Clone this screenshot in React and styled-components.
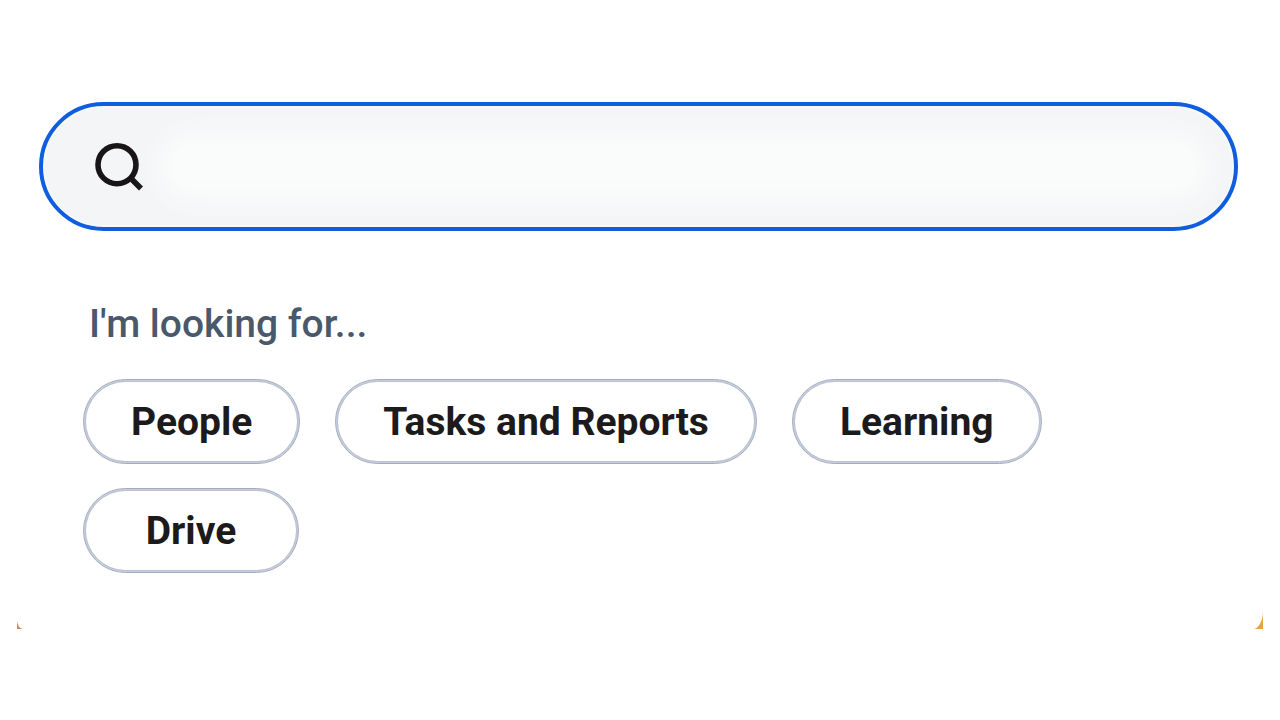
import React from 'react';
import styled, { createGlobalStyle } from 'styled-components';


const GlobalStyle = createGlobalStyle`
* {
    box-sizing: border-box;
}

body {
    margin: 0;
    background: #ffffff;
    font-family: Roboto, "Liberation Sans", sans-serif;
}
`;

const Backdrop = styled.main`
margin: 0 17px;
background: linear-gradient(90deg, #cf8a55 50%, #e3a43f 50%);
`;

const Panel = styled.div`
padding: 102px 25px 56px 22px;
background: #ffffff;
border-radius: 0 0 10px 6px / 0 0 18px 9px;
`;

const SearchBar = styled.label`
display: flex;
align-items: center;
gap: 26px;
height: 129px;
padding: 0 38px 0 50px;
border: 4px solid #0f5de0;
border-radius: 65px;
background: #f4f5f7;
box-shadow: inset 0 0 2px 1px #fffdf2;
`;

const SearchIcon = styled.svg`
flex: none;
width: 52px;
height: 52px;
`;

const SearchInput = styled.input`
flex: 1;
min-width: 0;
height: 44px;
border: 0;
outline: 0;
border-radius: 20px;
background: #fafcfb;
box-shadow: 0 0 24px 12px #fafcfb;
font: inherit;
font-size: 39px;
color: #1c1a1b;
`;

const Suggestions = styled.section`
padding: 68px 44px 0;
`;

const Heading = styled.h2`
margin: 0 0 30px;
padding-left: 6px;
font-size: 39px;
font-weight: 500;
line-height: 50px;
color: #4a586b;
`;

const ChipList = styled.div`
display: flex;
flex-wrap: wrap;
gap: 24px 35px;
`;

const Chip = styled.button`
min-width: 216px;
height: 85px;
padding: 0 47px;
border: 1px solid #a3a9ba;
border-radius: 43px;
background: transparent;
box-shadow: inset 0 0 0 1px #c6cfdf, inset 0 0 0 2px #bac2d2;
font: inherit;
font-size: 39px;
font-weight: 700;
color: #1c1a1b;
cursor: pointer;
`;

const categories = ['People', 'Tasks and Reports', 'Learning', 'Drive'];


const App = () => {
    return (
        <>
            <GlobalStyle />
            <Backdrop>
                <Panel>
                    <SearchBar>
                        <SearchIcon viewBox="0 0 52 52" fill="none" stroke="#191516" strokeWidth="5.6" aria-hidden="true">
                            <circle cx="24" cy="23.7" r="19" />
                            <path d="M37 36.5 48 47.5" />
                        </SearchIcon>
                        <SearchInput type="text" aria-label="Search" />
                    </SearchBar>

                    <Suggestions>
                        <Heading>I'm looking for...</Heading>
                        <ChipList>
                            {categories.map((name) => (
                                <Chip key={name} type="button">{name}</Chip>
                            ))}
                        </ChipList>
                    </Suggestions>
                </Panel>
            </Backdrop>
        </>
    )
}

export default App
